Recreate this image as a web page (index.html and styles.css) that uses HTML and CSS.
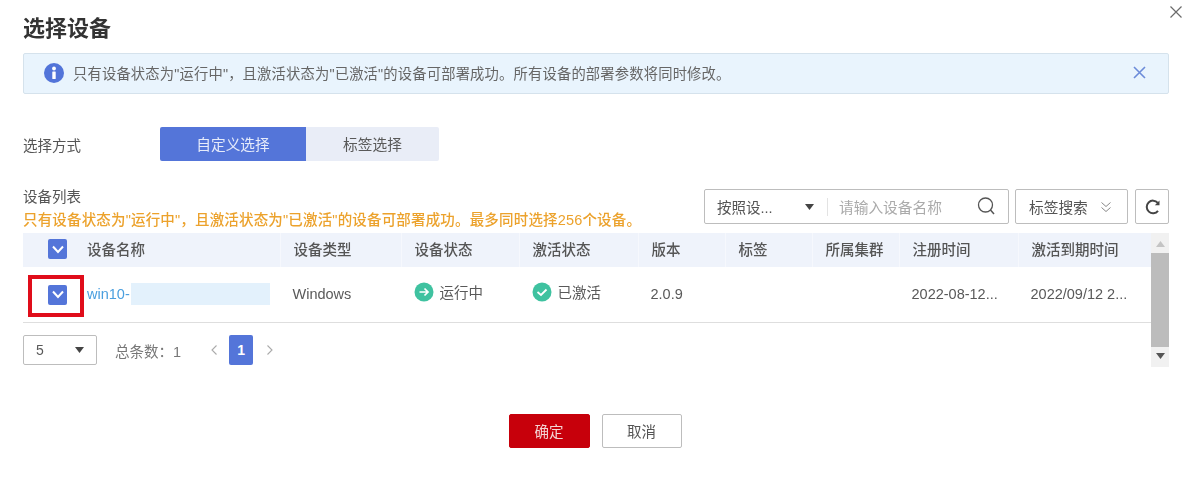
FILE: index.html
```html
<!DOCTYPE html>
<html lang="zh-CN">
<head>
<meta charset="utf-8">
<title>选择设备</title>
<link rel="stylesheet" href="styles.css">
</head>
<body>
<div class="dialog">
  <button class="close" aria-label="关闭"><svg width="14" height="14" viewBox="0 0 14 14"><path d="M1.500 1.500L12.500 12.500M12.500 1.500L1.500 12.500" stroke="#6b6b6b" stroke-width="1.200" fill="none"/></svg></button>
  <h1 class="title">选择设备</h1>

  <div class="alert">
    <svg class="alert-icon" width="20" height="20" viewBox="0 0 20 20"><circle cx="10" cy="10" r="10" fill="#5274d9"/><circle cx="10" cy="5.500" r="1.900" fill="#fff"/><rect x="8.300" y="8.500" width="3.400" height="7.500" rx=".5" fill="#fff"/></svg>
    <span class="alert-text">只有设备状态为"运行中"，且激活状态为"已激活"的设备可部署成功。所有设备的部署参数将同时修改。</span>
    <svg class="alert-close" width="13" height="13" viewBox="0 0 13 13"><path d="M1 1L12 12M12 1L1 12" stroke="#6c8bd9" stroke-width="1.600" fill="none"/></svg>
  </div>

  <div class="method">
    <span class="method-label">选择方式</span>
    <div class="tabs">
      <span class="tab tab-active">自定义选择</span>
      <span class="tab tab-idle">标签选择</span>
    </div>
  </div>

  <div class="toolbar">
    <div class="toolbar-text">
      <div class="list-title">设备列表</div>
      <div class="warn">只有设备状态为"运行中"，且激活状态为"已激活"的设备可部署成功。最多同时选择256个设备。</div>
    </div>
    <div class="search">
      <span class="search-type">按照设...</span>
      <svg class="caret" width="9" height="6" viewBox="0 0 9 6"><path d="M0 0H9L4.500 6Z" fill="#444"/></svg>
      <span class="search-sep"></span>
      <span class="search-ph">请输入设备名称</span>
      <svg class="search-icon" width="19" height="19" viewBox="0 0 19 19"><circle cx="8.500" cy="8" r="7" stroke="#555" stroke-width="1.300" fill="none"/><path d="M13.500 13L17 17" stroke="#555" stroke-width="1.500" fill="none"/></svg>
    </div>
    <div class="tag-search">
      <span>标签搜索</span>
      <svg width="12" height="12" viewBox="0 0 12 12"><path d="M1.500 1.500L6 5.500L10.500 1.500M1.500 6.500L6 10.500L10.500 6.500" stroke="#888" stroke-width="1" fill="none"/></svg>
    </div>
    <div class="refresh">
      <svg width="17" height="16" viewBox="0 0 17 16"><path d="M13.800 3.800A6.300 6.300 0 1 0 14 11.800" stroke="#444" stroke-width="2" fill="none"/><path d="M15.500 1.500V6.300H10.800Z" fill="#444"/></svg>
    </div>
  </div>

  <div class="table-wrap">
    <div class="table">
      <div class="row head">
        <div class="cell cell-check"><span class="check"><svg width="12" height="9" viewBox="0 0 12 9"><path d="M1 1.500L6 7L11 1.500" stroke="#fff" stroke-width="2" fill="none"/></svg></span></div>
        <div class="cell">设备名称</div>
        <div class="cell">设备类型</div>
        <div class="cell">设备状态</div>
        <div class="cell">激活状态</div>
        <div class="cell">版本</div>
        <div class="cell">标签</div>
        <div class="cell">所属集群</div>
        <div class="cell">注册时间</div>
        <div class="cell">激活到期时间</div>
      </div>
      <div class="row body">
        <div class="cell cell-check"><span class="check"><svg width="12" height="9" viewBox="0 0 12 9"><path d="M1 1.500L6 7L11 1.500" stroke="#fff" stroke-width="2" fill="none"/></svg></span><span class="highlight"></span></div>
        <div class="cell cell-name"><a class="link">win10-</a><span class="mask"></span></div>
        <div class="cell">Windows</div>
        <div class="cell status"><svg width="20" height="20" viewBox="0 0 20 20"><circle cx="10" cy="10" r="9.500" fill="#3fc2a0"/><path d="M5.500 10H14M10.500 6.500L14 10L10.500 13.500" stroke="#fff" stroke-width="1.700" fill="none"/></svg>运行中</div>
        <div class="cell status"><svg width="20" height="20" viewBox="0 0 20 20"><circle cx="10" cy="10" r="9.500" fill="#3fc2a0"/><path d="M5.500 10L9 13L14.500 7.500" stroke="#fff" stroke-width="1.800" fill="none"/></svg>已激活</div>
        <div class="cell">2.0.9</div>
        <div class="cell"></div>
        <div class="cell"></div>
        <div class="cell">2022-08-12...</div>
        <div class="cell">2022/09/12 2...</div>
      </div>
      <div class="pager">
        <div class="size"><span>5</span><svg width="9" height="6" viewBox="0 0 9 6"><path d="M0 0H9L4.500 6Z" fill="#444"/></svg></div>
        <span class="total">总条数：1</span>
        <svg class="pg-arrow pg-prev" width="6" height="10" viewBox="0 0 6 10"><path d="M5.500 .5L1 5L5.500 9.500" stroke="#aaa" stroke-width="1.100" fill="none"/></svg>
        <span class="page-num">1</span>
        <svg class="pg-arrow" width="6" height="10" viewBox="0 0 6 10"><path d="M.5 .5L5 5L.5 9.500" stroke="#aaa" stroke-width="1.100" fill="none"/></svg>
      </div>
    </div>
    <div class="scrollbar">
      <svg width="9" height="6" viewBox="0 0 9 6"><path d="M0 6H9L4.500 0Z" fill="#c4c4c4"/></svg>
      <div class="thumb"></div>
      <svg width="9" height="6" viewBox="0 0 9 6"><path d="M0 0H9L4.500 6Z" fill="#555"/></svg>
    </div>
  </div>

  <div class="actions">
    <button class="btn btn-primary">确定</button>
    <button class="btn btn-plain">取消</button>
  </div>
</div>
</body>
</html>
```
FILE: styles.css
```css
* { box-sizing: border-box; }
html, body { margin: 0; padding: 0; background: #fff; }
body {
  width: 1197px;
  height: 482px;
  overflow: hidden;
  font-family: "Liberation Sans", "Noto Sans CJK SC", sans-serif;
  color: #595959;
  font-size: 14.500px;
}
.dialog {
  position: relative;
  width: 1197px;
  height: 482px;
  padding: 14px 28px 0 23px;
  filter: blur(0.6px);
}
.close {
  position: absolute;
  top: 5px;
  right: 14px;
  width: 14px;
  height: 14px;
  padding: 0;
  border: 0;
  background: none;
  display: flex;
}
.title {
  margin: 0;
  height: 30px;
  font-size: 22px;
  line-height: 30px;
  font-weight: 700;
  color: #333;
}
.alert {
  margin-top: 9px;
  height: 41px;
  display: flex;
  align-items: center;
  padding: 0 22px 2px 20px;
  background: #e9f4fd;
  border: 1px solid #d5e2ec;
  border-radius: 2px;
}
.alert-text { margin-left: 9px; flex: 1; font-size: 14.300px; letter-spacing: .17px; color: #666; white-space: nowrap; }
.method {
  margin-top: 33px;
  display: flex;
  align-items: center;
  height: 35px;
}
.method-label { width: 137px; font-size: 14.500px; color: #555; }
.tabs { display: flex; height: 34px; margin-top: -1px; }
.tab {
  display: flex;
  align-items: center;
  justify-content: center;
  font-size: 14.700px;
  padding-bottom: 2px;
  border-radius: 2px 0 0 2px;
}
.tab-active { width: 146px; background: #5475d9; color: #e6ebfa; }
.tab-idle { width: 133px; background: #e9edf7; color: #595959; border-radius: 0 2px 2px 0; }
.toolbar {
  margin-top: 24px;
  height: 47px;
  display: flex;
  align-items: flex-start;
}
.toolbar-text { flex: 1; min-width: 0; padding-top: 1px; }
.list-title { font-size: 14.500px; line-height: 20px; color: #555; }
.warn { margin-top: 5px; font-size: 14.500px; letter-spacing: .17px; line-height: 17px; color: #eca22c; font-weight: 500; white-space: nowrap; }
.search {
  margin-top: 3px;
  width: 305px;
  margin-left: -10px;
  height: 35px;
  border: 1px solid #bdbdbd;
  border-radius: 2px;
  display: flex;
  align-items: center;
  padding: 0 12px;
  flex: none;
}
.search-type { width: 88px; font-size: 14.500px; color: #555; }
.caret { flex: none; }
.search-sep { width: 1px; height: 18px; background: #e3e3e3; margin: 0 11px 0 13px; }
.search-ph { flex: 1; font-size: 14.700px; color: #aaa; }
.tag-search {
  margin-left: 6px;
  margin-top: 3px;
  width: 113px;
  height: 35px;
  border: 1px solid #bdbdbd;
  border-radius: 2px;
  display: flex;
  align-items: center;
  gap: 12px;
  padding: 0 0 0 13px;
  font-size: 14.700px;
  color: #555;
  flex: none;
}
.refresh {
  margin-left: 7px;
  margin-top: 3px;
  width: 34px;
  height: 35px;
  border: 1px solid #bdbdbd;
  border-radius: 2px;
  display: flex;
  align-items: center;
  justify-content: center;
  flex: none;
}
.table-wrap { display: flex; margin-top: 0; }
.table { width: 1128px; }
.row {
  display: grid;
  grid-template-columns: 52px 205px 121px 118px 119px 87px 87px 87px 119px 133px;
}
.head { height: 34px; background: #eff3fb; color: #555; font-weight: 500; }
.head .cell { border-left: 1px solid #f6f8fd; padding-bottom: 3px; }
.head .cell:first-child, .head .cell:nth-child(2) { border-left: 0; }
.body { height: 56px; border-bottom: 1px solid #dedede; color: #595959; }
.cell {
  display: flex;
  align-items: center;
  padding-left: 12.500px;
  white-space: nowrap;
  min-width: 0;
}
.body .cell { padding-bottom: 1px; }
.head .cell-check, .cell-check { position: relative; padding-left: 25px; padding-bottom: 2px; }
.body .cell-check { padding-bottom: 0; }
.head .cell:nth-child(2), .cell-name { padding-left: 12px; }
.check {
  width: 19px;
  height: 20px;
  background: #5475d9;
  border-radius: 2px;
  display: flex;
  align-items: center;
  justify-content: center;
}
.highlight {
  position: absolute;
  left: 5px;
  top: 8px;
  width: 56px;
  height: 42px;
  border: 4px solid #e00d1a;
}
.link { color: #4a9fdf; }
.mask { width: 139px; height: 22px; margin-left: 1px; background: #e3f1fc; }
.body .status { gap: 6px; padding-bottom: 6px; }
.pager {
  margin-top: 11px;
  height: 32px;
  display: flex;
  align-items: center;
}
.size {
  width: 74px;
  height: 30px;
  border: 1px solid #bdbdbd;
  border-radius: 2px;
  display: flex;
  align-items: center;
  justify-content: space-between;
  padding: 0 12px;
  font-size: 14px;
}
.total { margin-left: 18px; font-size: 14.500px; color: #777; }
.pg-arrow { flex: none; }
.pg-prev { margin-left: 30px; }
.page-num {
  width: 24px;
  height: 30px;
  margin: 0 14px 0 12px;
  background: #5475d9;
  color: #fff;
  font-size: 14px;
  font-weight: 700;
  border-radius: 2px;
  display: flex;
  align-items: center;
  justify-content: center;
}
.scrollbar {
  width: 18px;
  height: 134px;
  background: #f1f1f1;
  display: flex;
  flex-direction: column;
  align-items: center;
  justify-content: space-between;
  padding: 8px 0;
}
.thumb { width: 100%; height: 94px; background: #bcbcbc; }
.actions {
  margin-top: 47px;
  display: flex;
  justify-content: center;
  gap: 12px;
  padding-right: 2px;
}
.btn {
  width: 80px;
  height: 34px;
  border-radius: 2px;
  font-family: inherit;
  font-size: 14.500px;
  padding: 0 0 2px;
}
.btn-primary { background: #c7000b; border: 1px solid #c7000b; color: #f3d5d5; width: 81px; }
.btn-plain { background: #fff; border: 1px solid #bdbdbd; color: #555; }
```
